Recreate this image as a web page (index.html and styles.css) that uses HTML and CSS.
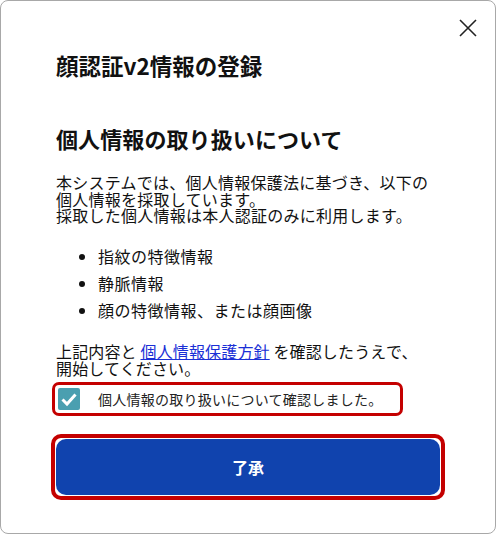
FILE: index.html
```html
<!DOCTYPE html>
<html lang="ja">
	<head>
		<meta charset="UTF-8">
		<title>顔認証v2情報の登録</title>
		<link rel="stylesheet" href="styles.css">
	</head>
	<body>
		<div class="dialog">
			<!--閉じる-->
			<button class="close" type="button" aria-label="閉じる">
				<svg width="18" height="18" viewBox="0 0 18 18">
					<path d="M1 1 L17 17 M17 1 L1 17" stroke="#222" stroke-width="1.6" fill="none"/>
				</svg>
			</button>

			<h1 class="title">顔認証v2情報の登録</h1>

			<h2 class="heading">個人情報の取り扱いについて</h2>

			<p class="lead">本システムでは、個人情報保護法に基づき、以下の<br>個人情報を採取しています。<br>採取した個人情報は本人認証のみに利用します。</p>

			<ul class="items">
				<li>指紋の特徴情報</li>
				<li>静脈情報</li>
				<li>顔の特徴情報、または顔画像</li>
			</ul>

			<p class="notice">上記内容と <a href="#">個人情報保護方針</a> を確認したうえで、<br>開始してください。</p>

			<!--同意チェック-->
			<label class="agree">
				<span class="check">
					<svg width="22" height="22" viewBox="0 0 22 22">
						<path d="M4.5 11.5 L9 16 L17.5 6.5" stroke="#fff" stroke-width="3" fill="none"/>
					</svg>
				</span>
				<span class="agree-text">個人情報の取り扱いについて確認しました。</span>
			</label>

			<div class="ok-wrap">
				<button class="ok" type="button">了承</button>
			</div>
		</div>
	</body>
</html>
```

FILE: styles.css
```css
* {
	margin: 0;
	padding: 0;
	box-sizing: border-box;
}

body {
	font-family: "Noto Sans CJK JP", "Noto Sans", sans-serif;
	color: #111;
	background: #fff;
}

.dialog {
	position: relative;
	width: 496px;
	height: 534px;
	border: 1px solid #a8a8a8;
	border-radius: 8px;
	padding: 50px 56px 0 55px;
}

.close {
	position: absolute;
	top: 18px;
	right: 18px;
	border: 0;
	background: none;
	width: 18px;
	height: 18px;
	display: flex;
}

.title {
	font-size: 22.5px;
	font-weight: 700;
	line-height: 28px;
}

.heading {
	margin-top: 43px;
	font-size: 22px;
	font-weight: 700;
	letter-spacing: 0.1px;
	line-height: 32px;
}

.lead {
	margin-top: 20px;
	font-size: 16px;
	letter-spacing: 0.25px;
	line-height: 16.5px;
}

.items {
	margin-top: 19px;
	padding-left: 42px;
	font-size: 16px;
	letter-spacing: 0.5px;
	line-height: 27px;
}

.notice {
	margin-top: 19px;
	font-size: 16px;
	letter-spacing: 0.15px;
	line-height: 17px;
}

.notice a {
	color: #1a2fd6;
}

.agree {
	margin-top: 5px;
	margin-left: -4px;
	display: flex;
	align-items: center;
	width: 351px;
	height: 34px;
	border: 3px solid #c40000;
	border-radius: 7px;
	padding: 0 3px;
}

.check {
	width: 22px;
	height: 22px;
	border-radius: 2px;
	background: #4a9fb0;
	display: flex;
}

.agree-text {
	margin-left: 18px;
	font-size: 14px;
	letter-spacing: 0.25px;
	color: #222;
}

.ok-wrap {
	margin-top: 18px;
	margin-left: -5px;
	width: 394px;
	height: 66px;
	border: 4px solid #c40000;
	border-radius: 10px;
	padding: 1px;
}

.ok {
	width: 100%;
	height: 100%;
	border: 0;
	border-radius: 10px;
	background: #1043ae;
	color: #fff;
	font-family: "Noto Sans CJK JP", "Noto Sans", sans-serif;
	font-size: 16px;
	font-weight: 700;
}
```
